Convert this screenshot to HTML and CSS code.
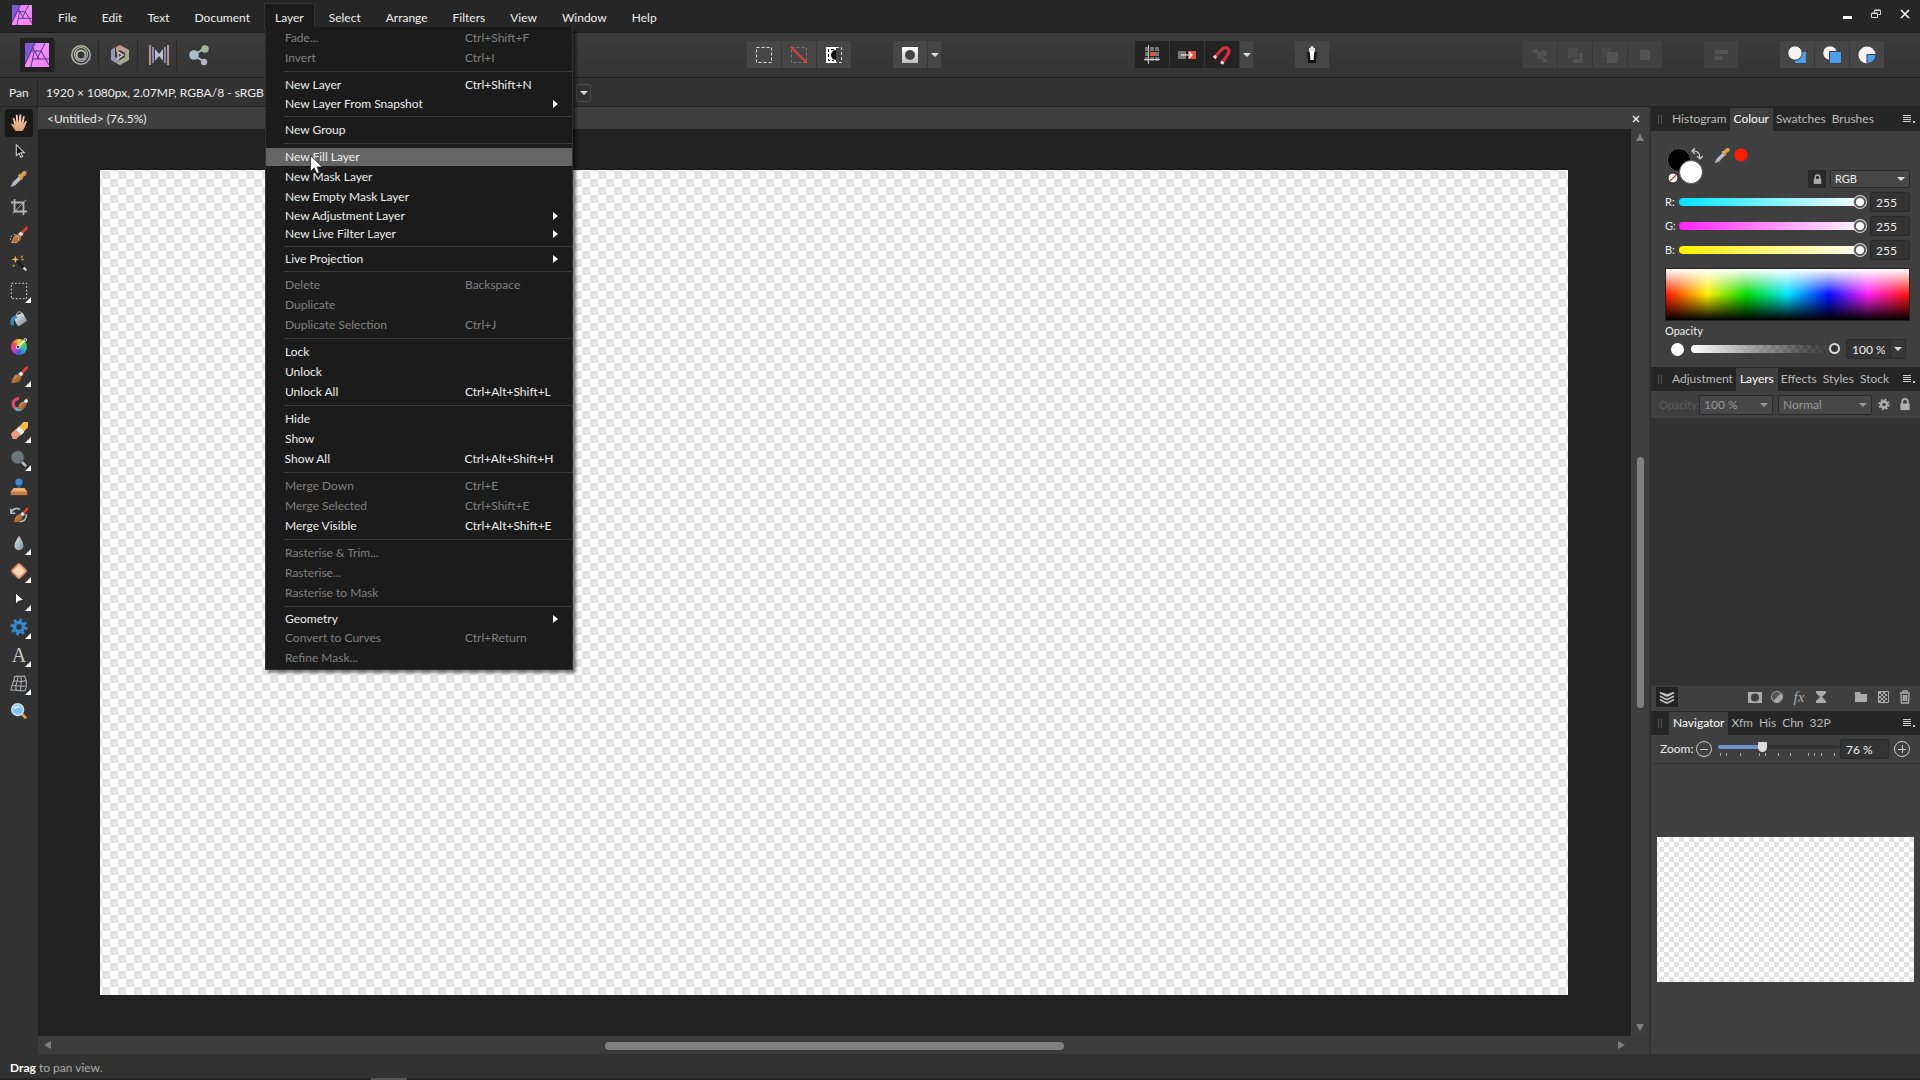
FILE: index.html
```html
<!DOCTYPE html>
<html lang="en">
<head>
<meta charset="utf-8">
<title>Photo editor</title>
<link rel="stylesheet" href="styles.css">
</head>
<body>
<svg class="defs" width="0" height="0" aria-hidden="true">
  <defs>
    <linearGradient id="g-logo" x1="0" y1="0" x2="1" y2="1"><stop offset="0" stop-color="#c77bf0"/><stop offset=".5" stop-color="#ee8ff8"/><stop offset="1" stop-color="#f97ff0"/></linearGradient>
    <linearGradient id="g-persona" x1="0" y1="0" x2="1" y2="1"><stop offset="0" stop-color="#c9b8ae"/><stop offset=".5" stop-color="#a9b9a0"/><stop offset="1" stop-color="#a99bb8"/></linearGradient>
    <linearGradient id="g-gold" x1="0" y1="0" x2="1" y2="1"><stop offset="0" stop-color="#ffd479"/><stop offset="1" stop-color="#b06a1c"/></linearGradient>
    <linearGradient id="g-wood" x1="0" y1="0" x2="1" y2="1"><stop offset="0" stop-color="#e0a060"/><stop offset="1" stop-color="#8a4714"/></linearGradient>
    <linearGradient id="g-steel" x1="0" y1="0" x2="1" y2="1"><stop offset="0" stop-color="#f4f6f8"/><stop offset="1" stop-color="#77818a"/></linearGradient>
    <linearGradient id="g-skin" x1="0" y1="0" x2="0" y2="1"><stop offset="0" stop-color="#ffd9b8"/><stop offset="1" stop-color="#dd9a6c"/></linearGradient>
    <linearGradient id="g-mask" x1="0" y1="0" x2="0" y2="1"><stop offset="0" stop-color="#ffffff"/><stop offset="1" stop-color="#bdbdbd"/></linearGradient>
    <linearGradient id="g-drop" x1="0" y1="0" x2="1" y2="1"><stop offset="0" stop-color="#e6f0f3"/><stop offset="1" stop-color="#6f8f99"/></linearGradient>
    <symbol id="i-logo" viewBox="0 0 24 24"><path fill="url(#g-logo)" d="M0 0h24v24H0z"/><path fill="#7d5bd6" d="M0 0h10L7 8 0 21z"/><path fill="none" stroke="#5b2f86" d="M10 0 0 21M8 5l6 11M20 0l-8 16M7 8h9M16 8l8 14M7 16h17M9 9 6 24"/></symbol>
    <symbol id="i-eyedropper" viewBox="0 0 20 20"><path fill="url(#g-steel)" d="M1 19l2-5 7-7 3 3-7 7z"/><path fill="url(#g-gold)" d="M9 6l2-2 1 1c1-3 3-4 5-4 2 1 2 4 0 5l-3 2 1 1-2 2z"/></symbol>
    <symbol id="i-brush" viewBox="0 0 20 20"><path fill="#e23a2c" d="M11 8l6-7 3-1-1 4-6 6z"/><path fill="#dfe4e8" d="M9 9l3-3 3 3-3 3z"/><path fill="url(#g-wood)" d="M1 19c2-2 1-5 4-8 2-2 5-2 7 0 1 3 0 5-3 7-3 1-6 1-8 1z"/></symbol>
    <symbol id="i-lock" viewBox="0 0 12 14"><path fill="none" stroke="currentColor" stroke-width="2" d="M3 7V4a3 3 0 0 1 6 0v3"/><path fill="currentColor" d="M1 6h10v7H1z"/></symbol>
    <symbol id="i-gear" viewBox="0 0 20 20"><circle cx="10" cy="10" r="8" fill="none" stroke="currentColor" stroke-width="3" stroke-dasharray="3.140 3.140"/><circle cx="10" cy="10" r="5" fill="none" stroke="currentColor" stroke-width="4"/></symbol>
    <symbol id="i-menu" viewBox="0 0 14 10"><path fill="currentColor" d="M0 0h8v1H0zM0 2h8v1H0zM0 4h8v1H0zM0 6h8v1H0zM10 6h2v2h-2z"/></symbol>
  </defs>
</svg>

<header class="titlebar">
  <svg class="app-logo"><use href="#i-logo"/></svg>
  <nav class="menubar">
    <button>File</button>
    <button>Edit</button>
    <button>Text</button>
    <button>Document</button>
    <div class="menu-host">
      <button class="open">Layer</button>
      <div class="menu" role="menu">
        <button class="item" disabled><span>Fade...</span><kbd>Ctrl+Shift+F</kbd></button>
        <button class="item" disabled><span>Invert</span><kbd>Ctrl+I</kbd></button>
        <hr>
        <button class="item"><span>New Layer</span><kbd>Ctrl+Shift+N</kbd></button>
        <button class="item sub"><span>New Layer From Snapshot</span></button>
        <hr>
        <button class="item"><span>New Group</span></button>
        <hr>
        <button class="item hover"><span>New Fill Layer</span>
          <svg class="cursor" viewBox="0 0 13 20"><path fill="#fff" stroke="#222" stroke-width=".8" d="M.5.5v16l3.700-3.500 2.500 5.600 2.800-1.200L7 12h5.300z"/></svg>
        </button>
        <button class="item"><span>New Mask Layer</span></button>
        <button class="item"><span>New Empty Mask Layer</span></button>
        <button class="item sub"><span>New Adjustment Layer</span></button>
        <button class="item sub"><span>New Live Filter Layer</span></button>
        <hr>
        <button class="item sub"><span>Live Projection</span></button>
        <hr>
        <button class="item" disabled><span>Delete</span><kbd>Backspace</kbd></button>
        <button class="item" disabled><span>Duplicate</span></button>
        <button class="item" disabled><span>Duplicate Selection</span><kbd>Ctrl+J</kbd></button>
        <hr>
        <button class="item"><span>Lock</span></button>
        <button class="item"><span>Unlock</span></button>
        <button class="item"><span>Unlock All</span><kbd>Ctrl+Alt+Shift+L</kbd></button>
        <hr>
        <button class="item"><span>Hide</span></button>
        <button class="item"><span>Show</span></button>
        <button class="item"><span>Show All</span><kbd>Ctrl+Alt+Shift+H</kbd></button>
        <hr>
        <button class="item" disabled><span>Merge Down</span><kbd>Ctrl+E</kbd></button>
        <button class="item" disabled><span>Merge Selected</span><kbd>Ctrl+Shift+E</kbd></button>
        <button class="item"><span>Merge Visible</span><kbd>Ctrl+Alt+Shift+E</kbd></button>
        <hr>
        <button class="item" disabled><span>Rasterise &amp; Trim...</span></button>
        <button class="item" disabled><span>Rasterise...</span></button>
        <button class="item" disabled><span>Rasterise to Mask</span></button>
        <hr>
        <button class="item sub"><span>Geometry</span></button>
        <button class="item" disabled><span>Convert to Curves</span><kbd>Ctrl+Return</kbd></button>
        <button class="item" disabled><span>Refine Mask...</span></button>
      </div>
    </div>
    <button>Select</button>
    <button>Arrange</button>
    <button>Filters</button>
    <button>View</button>
    <button>Window</button>
    <button>Help</button>
  </nav>
  <div class="window-controls">
    <button aria-label="Minimise"><svg viewBox="0 0 10 10"><path fill="#fff" d="M1 7h9v3H1z"/></svg></button>
    <button aria-label="Restore"><svg viewBox="0 0 10 10"><path fill="none" stroke="#ddd" d="M3.500 3.500v-2h6v4h-2M.5 4.500h6v4h-6z"/><path stroke="#ddd" d="M.5 4h6M3.500 1h6"/></svg></button>
    <button aria-label="Close"><svg viewBox="0 0 10 10"><path stroke="#fff" stroke-width="1.600" d="M1 1l8 8M9 1L1 9"/></svg></button>
  </div>
</header>

<div class="toolbar">
  <div class="personas">
    <button class="on" aria-label="Photo persona"><svg viewBox="0 0 24 24"><use href="#i-logo"/></svg></button>
    <button aria-label="Liquify persona"><svg viewBox="0 0 24 24"><g fill="none" stroke="url(#g-persona)"><circle cx="12" cy="12" r="9.200" stroke-width="1.600"/><ellipse cx="12" cy="11.500" rx="6.500" ry="7" stroke-width="1.200"/><circle cx="12" cy="12" r="4.500" stroke-width="2"/></g></svg></button>
    <button aria-label="Develop persona"><svg viewBox="0 0 24 24"><path fill="#c09f96" d="M8 4l4-2 9 5v6l-4-3-5-3-4 2z"/><path fill="#a3ab8d" d="M21 11v6l-9 5-4-2 4-3 5-3v-5z"/><path fill="#9a97bd" d="M3 7l4-3v10l5 3-4 3-5-3z"/><path fill="none" stroke="#d9cfc9" stroke-width="1.500" d="M10 9l5 3-5 3.500z"/></svg></button>
    <button aria-label="Tone mapping persona"><svg viewBox="0 0 24 24"><path stroke="#b3958f" stroke-width="2" d="M3 2v20M21 2v20"/><path stroke="#8a86a6" stroke-width="2" d="M6 4v16M18 4v16"/><path fill="#b9bccd" d="M8 6l4 5 4-5v12l-4-5-4 5z"/></svg></button>
    <button aria-label="Export persona"><svg viewBox="0 0 24 24"><path stroke="#b5c3c9" stroke-width="1.600" d="M8 12l11-7M8 12l10 7"/><circle cx="8" cy="12" r="4.800" fill="#a9bfcd"/><circle cx="19" cy="6" r="3.800" fill="#a5b59b"/><circle cx="18" cy="19" r="3.200" fill="#b3b1cb"/></svg></button>
  </div>
  <div class="space wide"></div>
  <div class="group">
    <button aria-label="Select all"><svg viewBox="0 0 20 20"><path fill="none" stroke="#ddd" stroke-dasharray="3 2" d="M2.500 2.500h15v15h-15z"/></svg></button>
    <button aria-label="Deselect"><svg viewBox="0 0 20 20"><path fill="none" stroke="#777" stroke-dasharray="3 2" d="M2.500 2.500h15v15h-15z"/><path stroke="#e0443a" stroke-width="1.800" d="M2 2l16 16"/></svg></button>
    <button aria-label="Invert selection"><svg viewBox="0 0 20 20"><path fill="#fff" d="M2 2h10v16H2z"/><path fill="#111" d="M12 5a5 5 0 0 0 0 10z"/><path fill="none" stroke="#111" stroke-dasharray="3 2" d="M10 4.500H4.500v11H10"/><path fill="none" stroke="#ddd" stroke-dasharray="3 2" d="M12 2.500h5.500v15H12"/></svg></button>
  </div>
  <div class="group">
    <button aria-label="Quick mask"><svg viewBox="0 0 20 20"><path fill="url(#g-mask)" d="M2 2h16v16H2z"/><circle cx="10" cy="10" r="5" fill="#444"/></svg></button>
    <button class="drop" aria-label="Quick mask options"></button>
  </div>
  <div class="space"></div>
  <div class="group">
    <button class="dark" aria-label="Grid"><svg viewBox="0 0 20 20"><path fill="#777" d="M3 2h4v4H3zM8 2h4v4H8zM13 2h4v4h-4zM3 7h4v4H3zM13 7h4v4h-4zM3 12h4v4H3zM8 12h4v4H8zM13 12h4v4h-4z"/><path fill="#e8503f" d="M8 7h5v4H8z"/><path stroke="#ccc" d="M6.500 0v19M2 14.500h16"/></svg></button>
    <button class="dark" aria-label="Force pixel alignment"><svg viewBox="0 0 20 20"><path fill="#777" d="M1 6h8v8H1z"/><path fill="#ec5140" d="M11 6h8v8h-8z"/><path fill="none" stroke="#fff" stroke-width="1.200" d="M4 10h10M12 7l3 3-3 3"/></svg></button>
    <button class="dark" aria-label="Snapping"><svg viewBox="0 0 20 20"><path fill="none" stroke="#d92c3f" stroke-width="3.200" d="M3 12l6-7c5-5 10-1 7 4l-6 9"/><path stroke="#f1d4d4" stroke-width="3.400" d="M2 13l2-2M9.500 19l1.500-2.500"/></svg></button>
    <button class="drop" aria-label="Snapping options"></button>
  </div>
  <div class="group">
    <button aria-label="Assistant"><svg viewBox="0 0 20 20"><path fill="#151515" d="M5 7h10l-1 11H6z"/><path fill="#fff" d="M7.500 6h5l-1 9h-3z"/><path fill="#ddd" d="M7 3h6v3H7z"/><circle cx="10" cy="2.500" r="1.500" fill="#eee"/></svg></button>
  </div>
  <div class="space"></div>
  <div class="group faded">
    <button disabled aria-label="Add"><svg viewBox="0 0 20 20"><path fill="#505050" d="M3 4h5v3h3V5h6v6h-3v3h3v3h-5v-3H7V8H3z"/></svg></button>
    <button disabled aria-label="Subtract"><svg viewBox="0 0 20 20"><path fill="#494949" d="M3 3h10v10H3z"/><path fill="#525252" d="M14 8h4v10H8v-4h6z"/></svg></button>
    <button disabled aria-label="Intersect"><svg viewBox="0 0 20 20"><path fill="#484848" d="M2 3h9v9H2z"/><path fill="#535353" d="M7 7h11v11H7z"/></svg></button>
    <button disabled aria-label="Divide"><svg viewBox="0 0 20 20"><path fill="#535353" d="M5 5h10v10H5z"/></svg></button>
  </div>
  <div class="group faded">
    <button disabled aria-label="Alignment"><svg viewBox="0 0 20 20"><path fill="#545454" d="M4 5h13v4H4zM4 11h8v4H4z"/></svg></button>
  </div>
  <div class="group">
    <button aria-label="Insert behind"><svg viewBox="0 0 20 20"><path fill="#4aa0ea" d="M8 7h11v11H8z"/><circle cx="8" cy="8" r="7.200" fill="#f4f4f4" stroke="#3d3d3d"/></svg></button>
    <button aria-label="Insert on top"><svg viewBox="0 0 20 20"><circle cx="8" cy="8" r="6.800" fill="#f4f4f4"/><path fill="#4aa0ea" stroke="#3d3d3d" d="M7.500 6.500h12v12h-12z"/></svg></button>
    <button aria-label="Insert inside"><svg viewBox="0 0 20 20"><circle cx="10" cy="10" r="8.500" fill="#f4f4f4"/><path fill="#4aa0ea" stroke="#3d3d3d" d="M10 9.500h9a9 9 0 0 1-9 9z"/></svg></button>
  </div>
</div>

<div class="contextbar">
  <strong class="tool-name">Pan</strong>
  <span class="doc-info">1920 × 1080px, 2.07MP, RGBA/8 - sRGB IE</span>
  <button class="drop" aria-label="Units"></button>
</div>

<main class="workspace">
  <aside class="tools">
    <button class="on" aria-label="View tool"><svg viewBox="0 0 20 20"><path fill="url(#g-skin)" d="M6 19c-1-3-4-6-5-8 1-1 2 0 4 2L3 5c0-1 2-1 2 0l2 5-.5-8c0-1.500 2-1.500 2 0L9.500 10l1-9c.3-1 2-1 2 0v9l2-7c.5-1 2-1 1.700.5L15 11l2-3c1-1 2 0 1.500 1-1 3-2 6-4.500 10z"/></svg></button>
    <button aria-label="Move tool"><svg viewBox="0 0 20 20"><path fill="#111" stroke="#ccc" stroke-width="1.200" d="M7 3v12l3-2.500 2 4.500 2-1-2-4h4z"/></svg></button>
    <button aria-label="Colour picker"><svg><use href="#i-eyedropper"/></svg></button>
    <button aria-label="Crop"><svg viewBox="0 0 20 20"><path fill="none" stroke="#b5b5b5" stroke-width="2" d="M1 5h14v14M5 1v14h14"/><path stroke="#b5b5b5" d="M3 17L18 2"/></svg></button>
    <button aria-label="Selection brush"><svg viewBox="0 0 20 20"><use href="#i-brush"/><circle cx="5" cy="14" r="4.500" fill="none" stroke="#eee" stroke-dasharray="2 2"/></svg></button>
    <button aria-label="Flood select"><svg viewBox="0 0 20 20"><path stroke="#1a1a1a" stroke-width="3" d="M8 8l8 8"/><path stroke="#ddd" stroke-width="2.500" d="M15 15l3 3"/><path fill="#f6c04a" d="M6 2l1 3 3 1-3 1-1 3-1-3-3-1 3-1zM12 1l1 2 1-2v3h-2zM3 11l1 2 1-2v3H3zM12 6l3-1v2z"/></svg></button>
    <button class="more" aria-label="Marquee"><svg viewBox="0 0 20 20"><path fill="none" stroke="#e8e8e8" stroke-dasharray="2 2" d="M1.500 1.500h17v17h-17z"/></svg></button>
    <button aria-label="Flood fill"><svg viewBox="0 0 20 20"><path fill="url(#g-steel)" d="M5 7l9-4 5 9-9 6c-3-1-5-6-5-11z"/><path fill="none" stroke="#ddd" d="M7 6c1-5 6-6 8 1"/><path fill="#2f8fd0" d="M1 17c-1-6 0-10 5-11l3 3c-4 0-5 3-5 8z"/></svg></button>
    <button aria-label="Gradient"><span class="wheel"></span><svg class="over" viewBox="0 0 20 20"><path stroke="#fff" stroke-width="1.500" d="M9 10l8-8"/><circle cx="9" cy="10" r="2" fill="#333" stroke="#fff"/><circle cx="17" cy="2" r="1.500" fill="#333" stroke="#fff"/></svg></button>
    <button class="more" aria-label="Paint brush"><svg><use href="#i-brush"/></svg></button>
    <button aria-label="Colour replacement"><svg viewBox="0 0 20 20"><path fill="none" stroke="#e0486c" stroke-width="3.500" d="M10 5A6 6 0 1 0 14 15"/><path fill="none" stroke="#56b5d8" stroke-width="3.500" d="M6 16a6 6 0 0 0 8-1"/><svg x="7" y="0" width="13" height="13"><use href="#i-brush"/></svg></svg></button>
    <button class="more" aria-label="Erase"><svg viewBox="0 0 20 20"><path fill="#f6bc4a" d="M9 6l6-6h5v6l-6 6z"/><path fill="#e8edf0" d="M6 9l4-4 6 6-4 4z"/><path fill="#ef9a86" d="M1 13l5-5 6 6-5 5H3z"/></svg></button>
    <button class="more" aria-label="Dodge"><svg viewBox="0 0 20 20"><path stroke="#b5bbbf" stroke-width="3" d="M13 13l5 5"/><circle cx="8.500" cy="8" r="7" fill="#6c767b" stroke="#525a5e"/></svg></button>
    <button aria-label="Clone"><svg viewBox="0 0 20 20"><circle cx="10" cy="4.500" r="4" fill="#3b8ad6"/><path fill="#2b6aad" d="M8.500 8h3v5h-3z"/><path fill="#eeb078" d="M4 11h12l3 4v4H1v-4z"/><path fill="#c57b43" d="M1 15h18v4H1z"/></svg></button>
    <button aria-label="Undo brush"><svg viewBox="0 0 20 20"><path fill="none" stroke="#aebfc9" stroke-width="1.800" d="M1 7c3-5 8-5 10-3M18 9c1 6-4 9-8 8M1 3v5h5"/><svg x="3" y="1" width="16" height="16"><use href="#i-brush"/></svg></svg></button>
    <button class="more" aria-label="Blur"><svg viewBox="0 0 20 20"><path fill="url(#g-drop)" d="M10 2c2 4 5 7 5 11a5 5 0 0 1-10 0c0-4 3-7 5-11z"/></svg></button>
    <button class="more" aria-label="Patch"><svg viewBox="0 0 20 20"><rect x="4" y="4" width="12" height="12" rx="2" fill="#f8d3b8" stroke="#d98c62" stroke-width="2" transform="rotate(45 10 10)"/></svg></button>
    <button class="more" aria-label="Node"><svg viewBox="0 0 20 20"><path fill="#fff" stroke="#111" d="M6 3v13l3.500-3.500 6-1z"/></svg></button>
    <button class="more blue" aria-label="Shape"><svg><use href="#i-gear"/></svg></button>
    <button class="more letter" aria-label="Text">A</button>
    <button class="more" aria-label="Mesh warp"><svg viewBox="0 0 20 20"><path fill="none" stroke="#a9aeb8" stroke-width="1.200" d="M5 3c4-2 7 1 11-1l2 5c0 4 1 7-1 11-5 2-10-1-16 0 0-5 4-9 4-15zM4 8c5-1 9 2 14-1M3 13c5-1 10 2 15 0M9 2c0 6-4 10-2 16M12 2c2 6-1 11 0 17"/></svg></button>
    <button aria-label="Zoom tool"><svg viewBox="0 0 20 20"><path stroke="#e0a04e" stroke-width="3" d="M13 13l5 5"/><circle cx="8.500" cy="8.500" r="6.500" fill="#7fc1ee" stroke="#d5e3ec" stroke-width="1.800"/><path fill="#c9e6fa" d="M4 8c1-4 6-5 8-2-3 0-5 1-8 2z"/></svg></button>
  </aside>

  <section class="document">
    <div class="doc-tabs"><span>&lt;Untitled&gt; (76.5%)</span><button aria-label="Close document"><svg viewBox="0 0 8 8"><path stroke="#eee" stroke-width="1.400" d="M1 1l6 6M7 1L1 7"/></svg></button></div>
    <div class="doc-body">
      <div class="canvas"><div class="artboard"></div></div>
      <div class="vscroll"><i class="arrow up"></i><i class="thumb"></i><i class="arrow down"></i></div>
    </div>
    <div class="hscroll"><i class="arrow left"></i><i class="thumb"></i><i class="arrow right"></i></div>
  </section>

  <aside class="panels">
    <div class="tabs">
      <i class="grip"></i><button>Histogram</button><button class="on">Colour</button><button>Swatches</button><button>Brushes</button>
      <button class="panel-menu" aria-label="Panel menu"><svg><use href="#i-menu"/></svg></button>
    </div>
    <div class="colour">
      <div class="colour-head">
        <svg class="wells" viewBox="0 0 84 38"><circle cx="14" cy="12" r="11.500" fill="#000" stroke="#5a5a5a"/><circle cx="26" cy="24" r="11.500" fill="#fff" stroke="#5a5a5a"/><circle cx="8" cy="30" r="5" fill="#fff" stroke="#222"/><path stroke="#d8392c" stroke-width="1.200" d="M5 33l6-6"/><path fill="none" stroke="#ccc" stroke-width="1.200" d="M27 3c5-1 8 2 8 7M30 0l-3 3 3 3M32 8l3 3 3-3"/><svg x="49" y="-1" width="17" height="17"><use href="#i-eyedropper"/></svg><circle cx="76" cy="7" r="7" fill="#ff1a00" stroke="#444"/></svg>
        <button class="lock" aria-label="Lock colour"><svg><use href="#i-lock"/></svg></button>
        <span class="select model"><select aria-label="Colour model"><option>RGB</option></select></span>
      </div>
      <div class="channel"><label for="r">R:</label><input id="r" class="red" type="range" max="255" value="255"><input type="text" value="255" aria-label="Red"></div>
      <div class="channel"><label for="g">G:</label><input id="g" class="green" type="range" max="255" value="255"><input type="text" value="255" aria-label="Green"></div>
      <div class="channel"><label for="b">B:</label><input id="b" class="yellow" type="range" max="255" value="255"><input type="text" value="255" aria-label="Blue"></div>
      <div class="spectrum"></div>
      <label class="opacity-label" for="op">Opacity</label>
      <div class="opacity-row"><i class="dot"></i><input id="op" class="alpha" type="range" value="100"><input type="text" value="100 %" aria-label="Opacity value"><button class="drop" aria-label="Opacity options"></button></div>
    </div>

    <div class="tabs">
      <i class="grip"></i><button>Adjustment</button><button class="on">Layers</button><button>Effects</button><button>Styles</button><button>Stock</button>
      <button class="panel-menu" aria-label="Panel menu"><svg><use href="#i-menu"/></svg></button>
    </div>
    <div class="layer-opts">
      <label for="lop">Opacity:</label>
      <span class="select lop"><select id="lop" disabled><option>100 %</option></select></span>
      <span class="select blend"><select disabled aria-label="Blend mode"><option>Normal</option></select></span>
      <button aria-label="Blend options"><svg><use href="#i-gear"/></svg></button>
      <button aria-label="Lock layer"><svg><use href="#i-lock"/></svg></button>
    </div>
    <div class="layer-list"></div>
    <div class="layer-actions">
      <button class="on" aria-label="Edit all layers"><svg viewBox="0 0 18 16"><path fill="#c8c8c8" d="M1 2l8 3 8-3v2L9 8 1 4zM1 6l8 4 8-4v2l-8 4-8-4zM1 10l8 4 8-4v2l-8 4-8-4z"/></svg></button>
      <i class="space"></i>
      <button aria-label="Mask layer"><svg viewBox="0 0 16 16"><path fill="currentColor" fill-rule="evenodd" d="M1 3h14v11H1zM8 4.500a4 4 0 1 0 0 8 4 4 0 0 0 0-8z"/></svg></button>
      <button aria-label="Adjustments"><svg viewBox="0 0 16 16"><circle cx="8" cy="8" r="5.500" fill="none" stroke="currentColor"/><path fill="currentColor" d="M12 4a5.700 5.700 0 0 1-8 8z"/><path fill="#888" d="M4 12a5.700 5.700 0 0 1 8-8z" opacity=".3"/></svg></button>
      <button class="fx" aria-label="Layer effects">fx</button>
      <button aria-label="Live filters"><svg viewBox="0 0 16 16"><path fill="currentColor" d="M3 2h10v2l-4 4 4 4v2H3v-2l4-4-4-4z"/></svg></button>
      <i class="gap"></i>
      <button aria-label="Group"><svg viewBox="0 0 16 16"><path fill="currentColor" d="M2 3h5l1 2h6v8H2z"/></svg></button>
      <button aria-label="Add pixel layer"><svg viewBox="0 0 16 16"><path fill="none" stroke="currentColor" d="M3.500 2.500h10v11h-10z"/><path fill="currentColor" d="M4 3h2v2H4zM8 3h2v2H8zM6 5h2v2H6zM10 5h2v2h-2zM4 7h2v2H4zM8 7h2v2H8zM6 9h2v2H6zM10 9h2v2h-2zM4 11h2v2H4zM8 11h2v2H8z"/></svg></button>
      <button aria-label="Delete layer"><svg viewBox="0 0 16 16"><path fill="none" stroke="currentColor" stroke-width="1.400" d="M3 4h10M6 3.500V2h4v1.500M4 5l.5 9h7l.5-9M6.500 6v6M8 6v6M9.600 6v6"/></svg></button>
    </div>

    <div class="tabs">
      <i class="grip"></i><button class="on">Navigator</button><button>Xfm</button><button>His</button><button>Chn</button><button>32P</button>
      <button class="panel-menu" aria-label="Panel menu"><svg><use href="#i-menu"/></svg></button>
    </div>
    <div class="zoom-row">
      <label for="zoom">Zoom:</label>
      <button class="round" aria-label="Zoom out"><svg viewBox="0 0 18 18"><circle cx="9" cy="9" r="7.500" fill="none" stroke="#ccc"/><path stroke="#ccc" d="M5 9.500h8"/></svg></button>
      <div class="zoom-slider"><input id="zoom" type="range" value="35"><svg viewBox="0 0 122 4" preserveAspectRatio="none"><path stroke="#aaa" d="M2.500 0v3M8.500 0v3M22.500 0v3M41.500 0v3M47.500 0v3M60.500 0v3M72.500 0v3M90.500 0v3M96.500 0v3M103.500 0v3M116.500 0v3"/></svg></div>
      <input type="text" value="76 %" aria-label="Zoom value">
      <button class="round" aria-label="Zoom in"><svg viewBox="0 0 18 18"><circle cx="9" cy="9" r="7.500" fill="none" stroke="#ccc"/><path stroke="#ccc" d="M5 9.500h8M9.500 5v8"/></svg></button>
    </div>
    <div class="navigator"><div class="preview"></div></div>
  </aside>
</main>

<footer class="statusbar"><p><b>Drag</b> to pan view.</p><div class="edge"><i></i></div></footer>
</body>
</html>
```
FILE: styles.css
```css
* { box-sizing: border-box; }

body {
  margin: 0;
  height: 100vh;
  display: flex;
  flex-direction: column;
  overflow: hidden;
  background: #323232;
  color: #eee;
  font: 12px/16px Lato, "Open Sans", sans-serif;
}

button, input, select { font: inherit; color: inherit; }
button { border: 0; padding: 0; background: none; display: flex; align-items: center; justify-content: center; }
input { min-width: 0; margin: 0; }
svg { display: block; }
.defs { position: absolute; }

/* Title bar and menus */
.titlebar { height: 33px; flex: none; display: flex; background: #262626; border-bottom: 1px solid #1a1a1a; }
.app-logo { width: 20px; height: 20px; margin: 5px 16px 0 12px; }
.menubar { display: flex; gap: 5px; flex: 1; padding-top: 4px; }
.menubar > button, .menu-host > button { height: 24px; padding: 3px 10px 0; }
.menu-host { position: relative; }
.menu-host > .open { background: #1b1b1b; outline: 1px solid #333; }

.menu {
  position: absolute;
  z-index: 10;
  left: 0;
  top: 23px;
  width: 308px;
  padding: 1px 0;
  background: #1b1b1b;
  border: 1px solid #303030;
  border-top: 0;
  box-shadow: 3px 3px 3px rgba(0, 0, 0, .5);
}
.item { position: relative; width: 100%; height: 20px; padding: 0 19px; display: grid; grid-template-columns: 180px 1fr; text-align: left; white-space: nowrap; }
.item kbd { font: inherit; }
.item:disabled { color: #808080; }
.item.sub { height: 18px; }
.item.sub::after { content: ""; justify-self: end; margin-right: -5px; border: 4px solid transparent; border-left: 5px solid #fff; border-right: 0; }
.item.hover { border: solid transparent; border-width: 1px 0; background: #656565 padding-box; }
.cursor { position: absolute; left: 44px; top: 7px; width: 13px; height: 20px; z-index: 1; }
.menu hr { height: 1px; margin: 3px 0 3px 18px; border: 0; background: #3a3a3a; }

.window-controls { display: flex; gap: 19px; padding: 9px 10px 0 0; align-items: flex-start; }
.window-controls svg { width: 10px; height: 10px; }

/* Main toolbar */
.toolbar { height: 45px; flex: none; display: flex; align-items: flex-start; padding: 8px 36px 0 20px; background: linear-gradient(#3c3c3c, #343434); border-bottom: 1px solid #1f1f1f; }
.personas { display: flex; align-items: center; gap: 5px; margin-top: -3px; }
.personas button { width: 34px; height: 34px; box-shadow: 3px 0 0 -2px #2a2a2a; }
.personas .on { background: #222; margin-right: 5px; }
.personas button:last-child { box-shadow: none; }
.personas svg { width: 24px; height: 24px; }
.toolbar .space { flex: 194; }
.toolbar .space.wide { flex: 532; }
.group { display: flex; gap: 1px; }
.group + .group { margin-left: 42px; }
.group button { width: 34px; height: 27px; background: #464646; }
.group .dark { background: #232323; }
.faded button { background: #414141; }
.group svg { width: 20px; height: 20px; }
.group .drop { width: 13px; }
.drop::before, .select::after { content: ""; border: 4px solid transparent; border-top-color: #ddd; border-bottom: 0; }

/* Context bar */
.contextbar { height: 29px; flex: none; display: flex; align-items: center; padding-top: 2px; border-bottom: 1px solid #242424; }
.tool-name { width: 38px; padding-left: 9px; font-weight: 400; border-right: 1px solid #242424; line-height: 26px; }
.doc-info { padding-left: 8px; width: 538px; white-space: nowrap; overflow: hidden; }
.contextbar .drop { width: 15px; height: 18px; border: 1px solid #4a4a4a; border-radius: 2px; }

.workspace { flex: 1; min-height: 0; display: flex; }

/* Tool column */
.tools { width: 38px; flex: none; padding: 2px 5px; }
.tools button { position: relative; width: 28px; height: 28px; }
.tools .on { background: #191919; border-radius: 3px; }
.tools svg { width: 18px; height: 18px; }
.tools .more::after { content: ""; position: absolute; right: 2px; bottom: 2px; border: 3px solid transparent; border-right-color: #fff; border-bottom-color: #fff; }
.tools .blue { color: #3287cf; }
.tools .letter { font: 20px/28px "Liberation Serif", serif; color: #ccc; }
.wheel { width: 16px; height: 16px; border-radius: 50%; background: conic-gradient(#f5d33c, #5bd04c, #2fb3c8, #4650d8, #d040c0, #f04848, #f5d33c); }
.tools .over { position: absolute; }

/* Document */
.document { flex: 1; min-width: 0; margin-right: 2px; display: flex; flex-direction: column; }
.doc-tabs { height: 22px; flex: none; display: flex; align-items: center; justify-content: space-between; padding: 2px 9px 0; background: #404040; }
.doc-tabs svg { width: 8px; height: 8px; }
.doc-body { flex: 1; min-height: 0; display: flex; }
.canvas { flex: 1; display: flex; padding: 41px 63px 41px 62px; background: #212121; }
.artboard, .preview { background: conic-gradient(#e3e3e3 25%, #fff 0 50%, #e3e3e3 0 75%, #fff 0) left 2px bottom 0 / 16px 16px; }
.artboard { flex: 1; }
.vscroll { width: 18px; display: flex; flex-direction: column; align-items: center; padding: 5px 0; background: #3e3e3e; }
.hscroll { height: 18px; flex: none; display: flex; align-items: center; padding: 0 24px 0 6px; background: #3b3b3b; }
.arrow { border: 4px solid transparent; }
.up { border-bottom: 7px solid #808080; border-top: 0; }
.down { border-top: 7px solid #808080; border-bottom: 0; }
.left { border-right: 7px solid #808080; border-left: 0; }
.right { border-left: 7px solid #808080; border-right: 0; }
.thumb { background: #808080; border-radius: 4px; }
.vscroll .thumb { width: 7px; height: 28%; margin: auto 0; }
.hscroll .thumb { height: 8px; width: 29%; margin: 2px auto 0; }

/* Panels */
.panels { width: 269px; flex: none; display: flex; flex-direction: column; background: #3f3f3f; }
.tabs { height: 24px; flex: none; display: flex; background: #262626; color: #bbb; padding: 1px 3px 0 7px; }
.tabs button { padding: 0 3px 2px; }
.tabs .on { background: #3f3f3f; color: #fff; padding: 0 4px 2px; }
.tabs .panel-menu { margin-left: auto; padding: 0; color: #ccc; }
.panel-menu svg { width: 14px; height: 10px; }
.grip { width: 4px; height: 9px; margin: 7px 7px 0 0; border: solid #555; border-width: 0 1px; }

.panels input[type=text] { height: 20px; border: 1px solid #2a2a2a; border-radius: 2px; background: #333; padding: 0 5px; }
.select { position: relative; display: flex; align-items: center; }
.select select { width: 100%; height: 18px; appearance: none; padding: 0 4px; background: #474747; border: 1px solid #2a2a2a; border-radius: 2px; opacity: 1; line-height: 14px; }
.select::after { position: absolute; right: 5px; }

.colour { height: 236px; flex: none; padding: 17px 10px 0 14px; }
.colour-head { height: 42px; display: flex; align-items: flex-start; }
.wells { width: 84px; height: 38px; margin-right: auto; }
.lock { width: 18px; height: 18px; margin: 22px 4px 0 0; background: #2a2a2a; color: #aaa; }
.lock svg { width: 9px; height: 11px; }
.model { width: 80px; margin-top: 22px; font-size: 11px; }
.channel { height: 24px; display: flex; align-items: center; }
.channel label { width: 14px; font-size: 11px; }
.channel input[type=text] { width: 40px; margin-left: 4px; }
input[type=range] { appearance: none; background: none; flex: 1; height: 14px; }
input[type=range]::-webkit-slider-runnable-track { height: 8px; border-radius: 4px; background: var(--track); }
input[type=range]::-webkit-slider-thumb { appearance: none; width: 12px; height: 12px; margin-top: -2px; border-radius: 50%; background: #fff; border: 2px solid #555; box-shadow: 0 0 0 1px #ddd; }
.red { --track: linear-gradient(90deg, #00e5ff, #fff); }
.green { --track: linear-gradient(90deg, #ff22f5, #fff); }
.yellow { --track: linear-gradient(90deg, #fff000, #fff); }
.alpha { --track: linear-gradient(90deg, #fff, #404040cc 80%, #3a3a3a), conic-gradient(#999 25%, #555 0 50%, #999 0 75%, #555 0) 0 0 / 8px 8px; margin: 0 6px 0 7px; }
.panels .alpha::-webkit-slider-thumb { width: 11px; height: 11px; margin-top: -2px; background: #333; border: 2px solid #ddd; box-shadow: none; }
.spectrum { height: 53px; margin-top: 6px; border: 1px solid #222; background: linear-gradient(#fff, #fff0 50%, #0000 50%, #000), linear-gradient(90deg, #ff1500, #fff000 17%, #00dc00 33%, #00e5ff 50%, #0010ff 67%, #ff20f5 83%, #ff1500); }
.opacity-label { display: block; margin-top: 2px; font-size: 11px; }
.opacity-row { display: flex; align-items: center; padding: 0 4px 0 6px; }
.opacity-row input[type=text] { width: 45px; }
.opacity-row .drop { width: 15px; height: 20px; border: 1px solid #2a2a2a; border-left: 0; background: #383838; }
.dot { width: 13px; height: 13px; border-radius: 50%; background: #fff; }

.layer-opts { height: 28px; flex: none; display: flex; align-items: center; padding: 0 9px 0 8px; color: #999; border-bottom: 1px solid #333; }
.layer-opts label { width: 40px; color: #5a5a5a; font-size: 11px; }
.layer-opts .lop { width: 74px; margin-right: 5px; }
.layer-opts .blend { width: 94px; margin-right: 5px; }
.layer-opts .select::after { border-top-color: #999; }
.layer-opts select { height: 20px; }
.layer-opts button { width: 13px; color: #b0b0b0; }
.layer-opts button + button { margin-left: auto; }
.layer-opts svg { width: 12px; height: 13px; }
.layer-list { height: 266px; flex: none; background: #323232; }
.layer-actions { height: 26px; flex: none; display: flex; align-items: flex-start; padding: 1px 4px 0 5px; color: #aaa; border-top: 1px solid #363636; }
.layer-actions button { width: 22px; height: 20px; }
.layer-actions .on { background: #232323; }
.layer-actions svg { width: 16px; height: 16px; }
.layer-actions .space { flex: 1; }
.layer-actions .gap { width: 18px; }
.layer-actions .fx { font: italic 15px/18px "Liberation Serif", serif; }

.zoom-row { height: 29px; flex: none; display: flex; align-items: center; padding: 0 9px; border-bottom: 1px solid #333; }
.zoom-row label { width: 35px; }
.round svg { width: 18px; height: 18px; }
.zoom-slider { flex: 1; margin: 0 0 0 5px; }
.zoom-slider input { display: block; width: 100%; height: 12px; --track: linear-gradient(90deg, #6b92cc 35%, #333 35%); }
.zoom-slider input::-webkit-slider-runnable-track { height: 4px; border-radius: 2px; }
.zoom-slider input::-webkit-slider-thumb { width: 9px; height: 10px; margin-top: -3px; border: 0; border-radius: 1px 1px 5px 5px; background: #ddd; box-shadow: none; }
.zoom-slider svg { width: 100%; height: 4px; }
.zoom-row input[type=text] { width: 49px; margin-right: 4px; }
.navigator { flex: 1; min-height: 0; display: flex; align-items: center; padding: 0 6px; }
.preview { flex: 1; height: 145px; background-size: 10px 10px; }

/* Status bar */
.statusbar { height: 26px; flex: none; color: #aaa; display: flex; flex-direction: column; justify-content: space-between; }
.statusbar p { margin: 0; padding: 6px 10px 0; }
.statusbar b { color: #fff; }
.edge { height: 2px; flex: none; background: #222; padding-left: 371px; }
.edge i { display: block; width: 36px; height: 2px; background: #555; }
```
